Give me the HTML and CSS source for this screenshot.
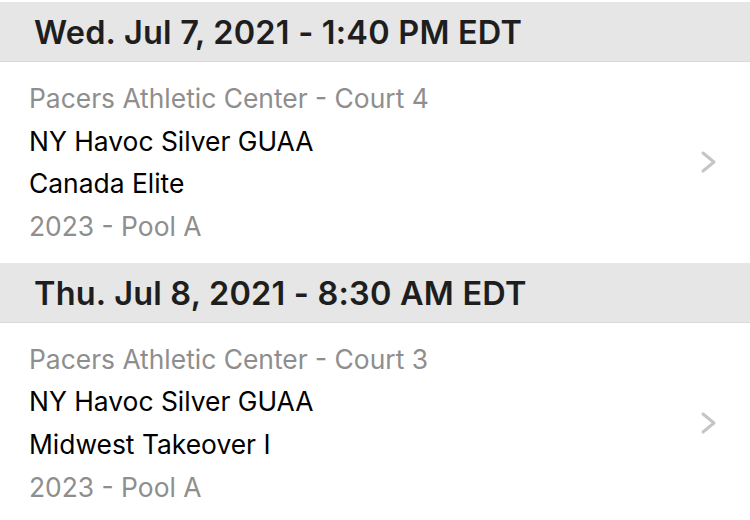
FILE: index.html
```html
<!DOCTYPE html>
<html>
<head>
<meta charset="utf-8">
<link rel="stylesheet" href="styles.css">
</head>
<body>
<div class="list">
  <div class="section-header">Wed. Jul 7, 2021 - 1:40 PM EDT</div>
  <div class="game">
    <div class="game-text">
      <div class="meta">Pacers Athletic Center - Court 4</div>
      <div class="team">NY Havoc Silver GUAA</div>
      <div class="team">Canada Elite</div>
      <div class="meta">2023 - Pool A</div>
    </div>
    <svg class="chevron" width="18" height="24" viewBox="0 0 18 24"><path d="M3 3 L14 12 L3 21" fill="none" stroke="#c5c5c8" stroke-width="3" stroke-linecap="round" stroke-linejoin="round"/></svg>
  </div>
  <div class="section-header">Thu. Jul 8, 2021 - 8:30 AM EDT</div>
  <div class="game">
    <div class="game-text">
      <div class="meta">Pacers Athletic Center - Court 3</div>
      <div class="team">NY Havoc Silver GUAA</div>
      <div class="team">Midwest Takeover I</div>
      <div class="meta">2023 - Pool A</div>
    </div>
    <svg class="chevron" width="18" height="24" viewBox="0 0 18 24"><path d="M3 3 L14 12 L3 21" fill="none" stroke="#c5c5c8" stroke-width="3" stroke-linecap="round" stroke-linejoin="round"/></svg>
  </div>
</div>
</body>
</html>
```
FILE: styles.css
```css
html, body {
  margin: 0;
  padding: 0;
  background: #ffffff;
}
body {
  font-family: Inter, "Liberation Sans", sans-serif;
  width: 750px;
  height: 520px;
  overflow: hidden;
  padding-top: 2px;
  box-sizing: border-box;
}
.list {
  display: flex;
  flex-direction: column;
}
.section-header {
  height: 60px;
  box-sizing: border-box;
  padding-left: 34px;
  padding-top: 2px;
  display: flex;
  align-items: center;
  background: #e6e6e6;
  border-bottom: 1px solid #dadada;
  color: #1e1e1e;
  font-size: 32.5px;
  font-weight: 600;
  letter-spacing: 0.2px;
}
.game {
  display: flex;
  align-items: center;
  padding: 15px 0 15px 29px;
}
.game-text {
  flex: 1;
  display: flex;
  flex-direction: column;
}
.meta, .team {
  font-size: 26.4px;
  line-height: 42.7px;
  height: 42.7px;
}
.meta {
  color: #8e8e8e;
}
.team {
  color: #000000;
}
.chevron {
  margin-right: 32px;
  flex: none;
}
```
